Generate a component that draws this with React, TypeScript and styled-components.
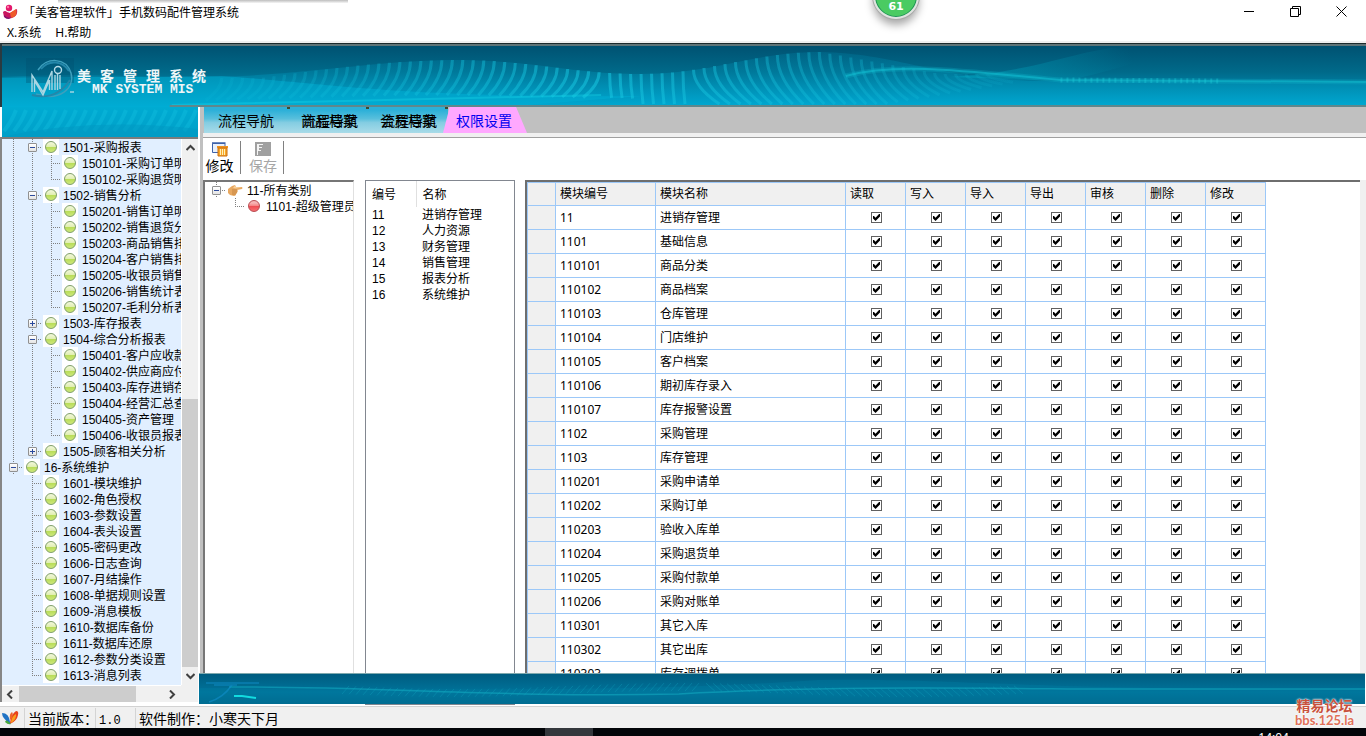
import React, { useState } from 'react';
import styled, { createGlobalStyle, css } from 'styled-components';

const GlobalStyle = createGlobalStyle`
  *, *::before, *::after { box-sizing: border-box; }
  body { margin: 0; background: #fff; color: #000; font: 12px/16px "Liberation Sans", "Noto Sans CJK SC", sans-serif; }
  button { font: inherit; color: inherit; background: none; border: 0; padding: 0; margin: 0; }
`;

const Window = styled.div`
  display: flex;
  flex-direction: column;
  height: 100vh;
  overflow: hidden;
`;

/* ---------- title bar and menu ---------- */

const TitleBar = styled.header`
  position: relative;
  flex: none;
  display: flex;
  align-items: center;
  height: 24px;
  padding: 0 12px 0 3px;
`;
const Title = styled.h1`
  margin: 0 auto 0 5px;
  font: 12px/16px "Noto Sans CJK SC", sans-serif;
`;
const WindowButtons = styled.div`
  display: flex;
  height: 22px;
`;
const WindowButton = styled.button`
  display: grid;
  place-items: center;
  width: 46px;
  height: 20px;
  &:last-child { width: 26px; margin-left: 10px; }
`;
const PopupShadow = styled.div`
  position: absolute;
  top: 0;
  left: 58px;
  width: 290px;
  height: 3px;
  background: linear-gradient(#bdbdbd, #f6f6f6);
`;
const ScoreBall = styled.div`
  position: absolute;
  z-index: 2;
  top: -27px;
  left: 65.6%;
  width: 46px;
  height: 46px;
  margin-left: -23px;
  padding-top: 24px;
  border: 2px solid #dfe3e0;
  border-radius: 50%;
  background: #4acb62;
  box-shadow: inset 0 0 0 1px #1f8f58, 0 0 0 1px #a9a9a9, 0 6px 8px rgba(0, 0, 0, 0.35);
  color: #fff;
  font: bold 11px/16px "DejaVu Sans", sans-serif;
  text-align: center;
`;
const MenuBar = styled.nav`
  flex: none;
  display: flex;
  gap: 14px;
  height: 19px;
  padding: 0 7px;
  border-bottom: 2px solid #f0f0f0;
  font-family: "Noto Sans", "Noto Sans CJK SC", sans-serif;
`;

/* ---------- brand banner ---------- */

const Banner = styled.section`
  position: relative;
  flex: none;
  height: 64px;
  padding: 18px 0 0 24px;
  display: flex;
  align-items: flex-start;
  border-top: 1px solid #1c2a2c;
  border-left: 2px solid #2a3a40;
  background: #00a4cc;
`;
const WaveArt = styled.svg`
  position: absolute;
  inset: 0;
  width: 100%;
  height: 100%;
`;
const Logo = styled.svg`
  position: relative;
  margin-top: -4px;
`;
const Brand = styled.div`
  position: relative;
  margin-left: 3px;
  padding-top: 5px;
  color: #eef6f8;
`;
const BrandName = styled.div`
  display: flex;
  gap: 9px;
  font: bold 14px/16px "Noto Sans CJK SC", sans-serif;
`;
const BrandSub = styled.div`
  padding-left: 15px;
  font: bold 13px/14px "Liberation Mono", monospace;
`;

/* ---------- body ---------- */

const Body = styled.div`
  flex: 1;
  min-height: 0;
  display: flex;
`;
const Sidebar = styled.aside`
  flex: none;
  display: flex;
  flex-direction: column;
  width: 199px;
  padding: 0 1px 0 2px;
  background: #fff;
`;
const SidebarArt = styled.div`
  position: relative;
  flex: none;
  height: 30px;
  background: linear-gradient(#00abd2, #009fc8);
`;
const TreeFrame = styled.div`
  flex: 1;
  min-height: 0;
  display: grid;
  grid-template: minmax(0, 1fr) 17px / minmax(0, 1fr) 17px;
  margin-left: -2px;
  margin-bottom: 4px;
  border-top: 2px solid #7c7c7c;
  border-left: 2px solid #868686;
  background: #f0f0f0;
`;
const SideTree = styled.ul`
  margin: 0;
  padding: 0 0 0 2px;
  overflow: hidden;
  list-style: none;
  background: #e1efff;
`;
const Corner = styled.div`
  background: #f0f0f0;
`;
const VScroll = styled.div`
  display: flex;
  flex-direction: column;
  align-items: center;
  justify-content: space-between;
  padding: 5px 0;
  border-left: 1px solid #fff;
`;
const VThumb = styled.div`
  width: 100%;
  height: 50%;
  margin: auto 0 4px;
  background: #cdcdcd;
`;
const HScroll = styled.div`
  display: flex;
  align-items: center;
  padding: 0 5px 0 4px;
  border-top: 1px solid #fff;
`;
const HThumb = styled.div`
  width: 117px;
  height: 100%;
  margin: 0 auto 0 4px;
  background: #cdcdcd;
`;

type Joint = 'none' | 'line' | 'tee' | 'end' | 'box';

const dotsV = 'repeating-linear-gradient(#808080 0 1px, transparent 1px 2px)';
const dotsH = 'repeating-linear-gradient(90deg, #808080 0 1px, transparent 1px 2px)';

const Row = styled.li`
  display: flex;
  height: 16px;
  line-height: 18px;
  white-space: nowrap;
`;
const Guide = styled.span<{ $joint: Joint }>`
  flex: none;
  display: grid;
  place-items: center;
  width: 19px;
  height: 16px;
  background-repeat: no-repeat;
  ${({ $joint }) => $joint === 'line' && css`
    background-image: ${dotsV};
    background-size: 1px 16px;
    background-position: 9px 0;
  `}
  ${({ $joint }) => $joint === 'tee' && css`
    background-image: ${dotsV}, ${dotsH};
    background-size: 1px 16px, 10px 1px;
    background-position: 9px 0, 9px 8px;
  `}
  ${({ $joint }) => $joint === 'end' && css`
    background-image: ${dotsV}, ${dotsH};
    background-size: 1px 9px, 10px 1px;
    background-position: 9px 0, 9px 8px;
  `}
  ${({ $joint }) => $joint === 'box' && css`
    background-image: ${dotsV}, ${dotsH};
    background-size: 1px 16px, 10px 1px;
    background-position: 9px 0, 9px 8px;
  `}
`;
const Expander = styled.button`
  position: relative;
  width: 9px;
  height: 9px;
  border: 1px solid #919191;
  border-radius: 1px;
  background: linear-gradient(#fff, #e4e4e4);
  &::before, &[aria-expanded='false']::after {
    content: '';
    position: absolute;
    top: 3px;
    left: 1px;
    width: 5px;
    height: 1px;
    background: #2b4a9c;
  }
  &[aria-expanded='false']::after { top: 1px; left: 3px; width: 1px; height: 5px; }
`;
const IconBox = styled.span`
  flex: none;
  display: grid;
  place-items: center;
  width: 16px;
  height: 16px;
  margin: 0 4px 0 1px;
  background: #fff;
`;
const Ball = styled.span<{ $red?: boolean }>`
  width: 12px;
  height: 12px;
  border: 1px solid ${({ $red }) => ($red ? '#b84a50' : '#7f9f68')};
  border-radius: 50%;
  background: ${({ $red }) =>
    $red
      ? 'linear-gradient(#f6b4b4 0 20%, #f58a8a 45%, #ee4a50 50%, #f76e70)'
      : 'linear-gradient(#f2f8dc, #e2efb4 45%, #b8dc58 52%, #cfe97c)'};
`;

/* ---------- work area ---------- */

const Main = styled.main`
  flex: 1;
  min-width: 0;
  display: flex;
  flex-direction: column;
`;
const Workspace = styled.div`
  flex: 1;
  min-height: 0;
  display: flex;
  flex-direction: column;
  margin-left: 1px;
  border-left: 3px solid #c0c0c0;
`;
const Tabs = styled.div`
  flex: none;
  display: flex;
  height: 26px;
  padding-left: 1px;
  background: #c0c0c0;
  font: 14px/26px "Noto Sans CJK SC", sans-serif;
`;
const Tab = styled.button<{ $first?: boolean }>`
  position: relative;
  width: ${({ $first }) => ($first ? '86px' : '79px')};
  padding-left: ${({ $first }) => ($first ? '14px' : '11px')};
  background: linear-gradient(#2cb0d8 0 12%, #58bfdc 45%, #84cde2 60%, #a8dbe8);
  line-height: 26px;
  text-align: left;
  &::before {
    content: '';
    position: absolute;
    top: 0;
    right: 0;
    width: 3px;
    height: 2px;
    background: #3a4a30;
  }
`;
const Ghost = styled.span`
  position: absolute;
  left: 12px;
  top: 0;
`;
const ActiveTab = styled.button`
  width: 84px;
  margin-left: -5px;
  padding-right: 2px;
  background: #ffa8ff;
  clip-path: polygon(8% 0, 87% 0, 100% 100%, 0 100%);
  color: #0000f0;
  line-height: 26px;
  z-index: 1;
`;
const TabEdge = styled.div`
  flex: none;
  height: 5px;
  background: #f0f0f0;
  border-bottom: 1px solid #a0a0a0;
`;
const Toolbar = styled.div`
  flex: none;
  display: flex;
  height: 42px;
  padding: 3px 0 6px;
`;
const Tool = styled.button`
  display: flex;
  flex-direction: column;
  align-items: center;
  width: 38px;
  padding-right: 4px;
  border-right: 1px solid #808080;
  font: 14px/16px "Noto Sans CJK SC", sans-serif;
  & + & { width: 43px; padding: 0 0 0 2px; }
  &:disabled { color: #a6a6a6; }
`;
const Panels = styled.div`
  flex: 1;
  min-height: 0;
  display: flex;
`;
const RoleTree = styled.ul`
  flex: none;
  width: 151px;
  margin: 0 11px 0 0;
  padding: 0 0 0 2px;
  overflow: hidden;
  list-style: none;
  border: solid #767676;
  border-width: 2px 0 0 2px;
  border-right: 1px solid #e0e0e0;
`;
const ListPanel = styled.div`
  flex: none;
  width: 150px;
  margin-right: 10px;
  overflow: hidden;
  border: 1px solid #828790;
  border-bottom: 0;
`;
const ListTable = styled.table`
  width: 100%;
  border-collapse: collapse;
  table-layout: fixed;
  th, td { height: 16px; padding: 0 0 0 6px; font-weight: normal; text-align: left; line-height: 16px; }
  th { height: 26px; padding-top: 1px; }
  th:first-child { width: 50px; border-right: 1px solid #e0e0e0; }
`;
const GridPanel = styled.div`
  flex: 1;
  min-width: 0;
  margin-right: 6px;
  overflow: hidden;
  border: solid #6e6e6e;
  border-width: 2px 0 0 2px;
  box-shadow: 6px 0 #f0f0f0;
`;
const Grid = styled.table`
  border-spacing: 0;
  border: solid #9cc8f8;
  border-width: 1px 0 0 1px;
  table-layout: fixed;
  width: 739px;
  font-family: "Noto Sans", "Noto Sans CJK SC", sans-serif;
  th, td {
    height: 24px;
    padding: 0 0 0 4px;
    border: solid #9cc8f8;
    border-width: 0 1px 1px 0;
    font-weight: normal;
    text-align: left;
    line-height: 16px;
  }
  thead th { height: 23px; }
  th { background: #f0f0f0; }
`;
const Column = styled.col<{ $width: number }>`
  width: ${({ $width }) => $width}px;
`;
const CheckCell = styled.td`
  && { padding: 0 0 0 25px; }
`;
const Check = styled.input`
  appearance: none;
  position: relative;
  display: block;
  width: 11px;
  height: 11px;
  margin: 0;
  border: 1px solid #606060;
  background: #fff;
  &:checked::after {
    content: '';
    position: absolute;
    inset: 1px;
    background: #000;
    clip-path: polygon(0 29%, 14% 29%, 36% 52%, 86% 0, 100% 0, 100% 36%, 36% 100%, 0 66%);
  }
`;
const FooterArt = styled.div`
  position: relative;
  flex: none;
  height: 31px;
  margin-right: 1px;
  background: linear-gradient(#005c80, #00739a 60%, #006488);
  border-top: 1px solid #7fa9ae;
`;
const FooterGap = styled.div`
  flex: none;
  height: 2px;
  padding-left: 166px;
  background: #fff;
  &::before { content: ''; display: block; width: 150px; height: 1px; background: #828790; }
`;

/* ---------- status and task bars ---------- */

const StatusBar = styled.footer`
  position: relative;
  flex: none;
  display: flex;
  align-items: center;
  height: 22px;
  padding-left: 2px;
  border-top: 1px solid #d2d2d2;
  background: #f0f0f0;
  font: 14px/20px "Noto Sans CJK SC", sans-serif;
`;
const StatusLogo = styled.svg`
  flex: none;
  margin-right: 5px;
`;
const StatusItem = styled.span<{ $width?: string }>`
  flex: none;
  width: ${({ $width }) => $width ?? 'auto'};
  height: 20px;
  padding-left: 3px;
  border-left: 1px solid #d4d4d4;
  white-space: nowrap;
`;
const Mono = styled.span`
  font: 12px/20px "Liberation Mono", monospace;
`;
const Watermark = styled.div`
  position: absolute;
  right: 12px;
  bottom: 1px;
  color: #c8513c;
  font: bold 14px/16px "Noto Sans CJK SC", sans-serif;
  text-align: center;
  text-shadow: 0 0 2px #fff, 0 0 2px #fff;
`;
const WatermarkUrl = styled.div`
  color: #e07058;
  font: bold 13px/14px Lato, sans-serif;
`;
const TaskBar = styled.div`
  flex: none;
  display: flex;
  justify-content: space-between;
  height: 8px;
  padding-left: 545px;
  overflow: hidden;
  background: #020509;
`;
const TaskItem = styled.div`
  width: 48px;
  background: #33373c;
`;
const Clock = styled.time`
  margin-right: 77px;
  padding-top: 2px;
  color: #fff;
  font: 12px/16px "Noto Sans", sans-serif;
`;

/* ---------- data ---------- */

type Node = { joints: Joint[]; label: string; open?: boolean };

const group = (label: string, open: boolean): Node => ({ joints: ['line', 'box'], label, open });
const leaves = (prefix: Joint[], labels: string[]): Node[] =>
  labels.map((label, i) => ({ joints: [...prefix, i === labels.length - 1 ? 'end' : 'tee'], label }));

const modules: Node[] = [
  group('1501-采购报表', true),
  ...leaves(['line', 'line'], ['150101-采购订单明细', '150102-采购退货明细']),
  group('1502-销售分析', true),
  ...leaves(['line', 'line'], [
    '150201-销售订单明细', '150202-销售退货分析', '150203-商品销售排行', '150204-客户销售排行',
    '150205-收银员销售', '150206-销售统计表', '150207-毛利分析表',
  ]),
  group('1503-库存报表', false),
  group('1504-综合分析报表', true),
  ...leaves(['line', 'line'], [
    '150401-客户应收款', '150402-供应商应付款', '150403-库存进销存', '150404-经营汇总查询',
    '150405-资产管理', '150406-收银员报表',
  ]),
  group('1505-顾客相关分析', false),
  { joints: ['box'], label: '16-系统维护', open: true },
  ...leaves(['none'], [
    '1601-模块维护', '1602-角色授权', '1603-参数设置', '1604-表头设置', '1605-密码更改',
    '1606-日志查询', '1607-月结操作', '1608-单据规则设置', '1609-消息模板', '1610-数据库备份',
    '1611-数据库还原', '1612-参数分类设置', '1613-消息列表',
  ]),
];

const categories = [
  ['11', '进销存管理'], ['12', '人力资源'], ['13', '财务管理'],
  ['14', '销售管理'], ['15', '报表分析'], ['16', '系统维护'],
];

const rights = ['读取', '写入', '导入', '导出', '审核', '删除', '修改'];

const permissions = [
  ['11', '进销存管理'], ['1101', '基础信息'], ['110101', '商品分类'], ['110102', '商品档案'],
  ['110103', '仓库管理'], ['110104', '门店维护'], ['110105', '客户档案'], ['110106', '期初库存录入'],
  ['110107', '库存报警设置'], ['1102', '采购管理'], ['1103', '库存管理'], ['110201', '采购申请单'],
  ['110202', '采购订单'], ['110203', '验收入库单'], ['110204', '采购退货单'], ['110205', '采购付款单'],
  ['110206', '采购对账单'], ['110301', '其它入库'], ['110302', '其它出库'], ['110303', '库存调拨单'],
];

/* ---------- drawings ---------- */

const upper = (x: number) =>
  x < 460 ? 34 - 18 * Math.sin(Math.max(0, (x - 260) / 200) * (Math.PI / 2)) :
  x < 640 ? 23 - 7 * Math.cos(((x - 460) / 180) * Math.PI) :
  x < 820 ? 19 + 11 * Math.cos(((x - 640) / 180) * Math.PI) :
  8 + 22 * Math.min(1, (x - 820) / 120);
const lower = (x: number) =>
  x < 640 ? 54 - 3 * Math.sin((x - 300) / 100) : x < 860 ? 60 : 60 - ((x - 860) / 140) * 24;

const ribs = Array.from({ length: 74 }, (_, i) => {
  const x = 220 + i * 10.5;
  const lean = x < 600 ? 16 : x < 690 ? -2 : -26;
  const top = upper(x);
  const bottom = Math.max(lower(x), top + 4);
  return `M${x} ${top.toFixed(1)}Q${x} ${((top + bottom) / 2).toFixed(1)} ${x - lean} ${bottom.toFixed(1)}`;
}).join('');

const BannerWaves = () => (
  <WaveArt viewBox="0 0 1366 63" preserveAspectRatio="none" aria-hidden="true">
    <defs>
      <linearGradient id="sea" x2="0" y2="1">
        <stop offset="0" stopColor="#005070" />
        <stop offset=".45" stopColor="#006a8a" />
        <stop offset="1" stopColor="#00a0cc" />
      </linearGradient>
      <linearGradient id="glow" x2="0" y2="1">
        <stop offset="0" stopColor="#0084a8" stopOpacity=".5" />
        <stop offset="1" stopColor="#00b2d8" stopOpacity=".9" />
      </linearGradient>
      <linearGradient id="haze" x1="960" x2="1130" y1="36" y2="4" gradientUnits="userSpaceOnUse">
        <stop offset="0" stopColor="#00a6c0" stopOpacity=".5" />
        <stop offset="1" stopColor="#00a6c0" stopOpacity="0" />
      </linearGradient>
      <linearGradient id="rib" x1="200" x2="1000" y1="0" y2="0" gradientUnits="userSpaceOnUse">
        <stop offset="0" stopColor="#10c4de" stopOpacity=".1" />
        <stop offset=".5" stopColor="#18c8e2" stopOpacity=".55" />
        <stop offset="1" stopColor="#18c8e2" stopOpacity=".1" />
      </linearGradient>
    </defs>
    <rect width="1366" height="63" fill="url(#sea)" />
    <path d="M0 33C90 28 170 36 240 32C330 27 390 15 465 16C540 18 580 31 640 30C720 29 750 8 820 8C900 10 930 34 1040 37L1366 39V63H0Z" fill="url(#glow)" opacity=".55" />
    <path d="M0 34C60 32 120 34 220 32C330 40 400 54 640 52L500 63H0Z" fill="#00b2d6" opacity=".45" />
    <path d="M950 33C1030 28 1060 12 1110 4L1180 8C1130 18 1090 34 1060 37Z" fill="url(#haze)" />
    <path d={ribs} fill="none" stroke="url(#rib)" strokeWidth="3" />
    <path d="M170 61C330 58 420 54 600 51" fill="none" stroke="#14d2e6" strokeWidth="2" opacity=".4" />
    <path d="M845 32C890 20 940 24 1060 36L1366 38" fill="none" stroke="#10bcd0" strokeWidth="5" opacity=".25" />
    <path d="M845 32C890 20 940 24 1060 36L1366 38" fill="none" stroke="#10bcd0" strokeWidth="2" opacity=".6" />
    <path d="M1060 36L1220 37" stroke="#20d0dc" strokeWidth="5" strokeDasharray="2 4" opacity=".35" />
    <rect width="1366" height="2" fill="#5e7478" />
    <rect x="168" y="61" width="1198" height="2" fill="#5f878c" />
  </WaveArt>
);

const SideWaves = () => (
  <WaveArt viewBox="0 0 196 30" preserveAspectRatio="none" aria-hidden="true">
    <path
      d={Array.from({ length: 19 }, (_, i) => `M${14 + i * 10} 3Q${10 + i * 10} 14 ${2 + i * 10} 24`).join('')}
      fill="none" stroke="#18c8e6" strokeWidth="4" opacity=".3"
    />
    <path d="M0 30Q90 10 196 22V30Z" fill="#0098c2" opacity=".5" />
  </WaveArt>
);

const FooterWaves = () => (
  <WaveArt viewBox="0 0 1166 30" preserveAspectRatio="none" aria-hidden="true">
    <path d="M0 14C200 14 420 20 620 6C760 4 860 18 1166 14V30H0Z" fill="#007ea4" opacity=".35" />
    <path
      d={Array.from({ length: 96 }, (_, i) => `M${150 + i * 7} ${12 + 3 * Math.sin(i / 10)}l${i > 50 ? 9 : -7} 8`).join('')}
      stroke="#10a4c0" strokeWidth="1" opacity=".35"
    />
    <path d="M30 13C180 12 300 24 480 20C620 12 760 14 880 15L1166 15" fill="none" stroke="#10a8c0" strokeWidth="1.5" opacity=".6" />
    <path d="M10 28Q24 24 33 11M7 9H60M15 11H38" fill="none" stroke="#1090cc" strokeWidth="1.5" opacity=".6" />
    <path d="M35 22H43L57 24" fill="none" stroke="#12dce0" strokeWidth="2" />
  </WaveArt>
);

const BrandLogo = () => (
  <Logo width="48" height="44" viewBox="0 0 48 44" aria-hidden="true">
    <rect width="48" height="25" fill="#004c6c" opacity=".35" />
    <path d="M12 12C20-1 40-1 45 15C49 30 34 44 10 36" fill="none" stroke="#3d9fbd" strokeWidth="1.5" />
    <path d="M15 11C23 1 37 3 43 13M6 37Q30 43 44 22" fill="none" stroke="#2387aa" strokeWidth="2" />
    <path d="M6 34V17L17 34L26 13V32M8.500 34V23L17 37L23.500 22V32M29 32V17M31.500 32V16M34 31V17" fill="none" stroke="#a9d6e2" strokeWidth="1.4" />
    <circle cx="32" cy="12" r="3.5" fill="none" stroke="#b8dde8" strokeWidth="1.4" />
    <path d="M44 34H48" stroke="#9fd4e2" strokeWidth="1.5" />
  </Logo>
);

const AppIcon = () => (
  <svg width="15" height="16" viewBox="0 0 15 16" aria-hidden="true">
    <circle cx="6" cy="4" r="3.2" fill="#e3186c" />
    <path d="M0 8Q2 6 4 8L7 9L14 5Q15 11 11 13Q5 16 1 13Z" fill="#c8145e" />
    <path d="M7 9L13 5Q15 10 11 13L8 14Z" fill="#ee5a2a" />
    <path d="M1 11Q5 15 9 13L6 15Q1 15 1 11Z" fill="#7e1470" />
    <circle cx="5" cy="3" r="1.2" fill="#ff77a8" />
  </svg>
);

const EditIcon = () => (
  <svg width="16" height="16" viewBox="0 0 16 16" aria-hidden="true">
    <path d="M.5 2.5H13V11.5H.5Z" fill="#e9f0fa" stroke="#3e62a8" />
    <path d="M0 2H13.5" stroke="#3e62a8" strokeWidth="1.5" />
    <path d="M5 5H16V7H5Z" fill="#f0921c" />
    <path d="M6 7H15V15H6Z" fill="#f8a828" stroke="#c86c10" />
    <path d="M8.5 8V14M10.500 8V14M12.500 8V14" stroke="#fff0b8" />
  </svg>
);

const SaveIcon = () => (
  <svg width="16" height="16" viewBox="0 0 16 16" aria-hidden="true">
    <path d="M0 1H16V15H0Z" fill="#a0a0a0" />
    <path d="M2 14V3H8V4H4V6H7V7H4V9H6V10H3V14Z" fill="#f4f4f4" />
  </svg>
);

const HandIcon = () => (
  <svg width="15" height="13" viewBox="0 0 15 13" aria-hidden="true">
    <path d="M0 5L4 2L7 1L8 3L14 3Q15 4 14 5L9 6Q11 7 9 8Q10 9 8 10Q8 12 6 12L2 11L0 9Z" fill="#e8a860" />
    <path d="M7 1.500L8 3L14 3.500L8 4.500L5 4Z" fill="#f8d09a" />
    <path d="M4 6H9M4 8H9M4 10H8" stroke="#b87838" strokeWidth=".7" />
  </svg>
);

const StatusIcon = () => (
  <StatusLogo width="17" height="15" viewBox="0 0 17 15" aria-hidden="true">
    <path d="M8 13Q9 4 14 1Q17 1 16 5Q15 11 8 14Z" fill="#e8431c" />
    <path d="M9 12Q10 6 14 4Q15 9 9 13Z" fill="#f9a01c" />
    <path d="M8 12Q7 3 0 3Q0 8 8 14Z" fill="#1f72c4" />
    <path d="M9 14Q4 8 3 12Q6 15 9 14Z" fill="#4aa83c" />
    <path d="M8 9Q7 4 10 2Q12 4 9 10Z" fill="#f0642c" />
  </StatusLogo>
);

const Chevron = ({ d }: { d: string }) => (
  <svg width="9" height="9" viewBox="0 0 9 9" aria-hidden="true">
    <path d={d} fill="none" stroke="#404040" strokeWidth="2" />
  </svg>
);

const TreeRow = ({ node, icon }: { node: Node; icon?: React.ReactNode }) => {
  const [open, setOpen] = useState(!!node.open);
  return (
    <Row>
      {node.joints.map((joint, i) => (
        <Guide key={i} $joint={joint}>
          {joint === 'box' && (
            <Expander type="button" aria-expanded={open} aria-label={node.label} onClick={() => setOpen(!open)} />
          )}
        </Guide>
      ))}
      <IconBox>{icon ?? <Ball />}</IconBox>
      {node.label}
    </Row>
  );
};

export default function App() {
  return (
    <Window>
      <GlobalStyle />
      <TitleBar>
        <PopupShadow />
        <ScoreBall>61</ScoreBall>
        <AppIcon />
        <Title>「美客管理软件」手机数码配件管理系统</Title>
        <WindowButtons>
          <WindowButton type="button" aria-label="最小化">
            <svg width="11" height="11"><path d="M0 5.500H10" stroke="#000" /></svg>
          </WindowButton>
          <WindowButton type="button" aria-label="还原">
            <svg width="11" height="11">
              <path d="M.5 2.500H8.500V10.500H.5ZM2.500 2V.5H10.500V8.500H9" fill="none" stroke="#000" />
            </svg>
          </WindowButton>
          <WindowButton type="button" aria-label="关闭">
            <svg width="11" height="11"><path d="M.5 .5L10.500 10.500M10.500 .5L.5 10.500" stroke="#000" /></svg>
          </WindowButton>
        </WindowButtons>
      </TitleBar>
      <MenuBar>
        <button type="button">X.系统</button>
        <button type="button">H.帮助</button>
      </MenuBar>
      <Banner>
        <BannerWaves />
        <BrandLogo />
        <Brand>
          <BrandName>
            {['美', '客', '管', '理', '系', '统'].map((c) => <span key={c}>{c}</span>)}
          </BrandName>
          <BrandSub>MK SYSTEM MIS</BrandSub>
        </Brand>
      </Banner>
      <Body>
        <Sidebar>
          <SidebarArt><SideWaves /></SidebarArt>
          <TreeFrame>
            <SideTree>
              {modules.map((node) => <TreeRow key={node.label} node={node} />)}
            </SideTree>
            <VScroll>
              <Chevron d="M.5 6L4.500 2L8.500 6" />
              <VThumb />
              <Chevron d="M.5 3L4.500 7L8.500 3" />
            </VScroll>
            <HScroll>
              <Chevron d="M6 .5L2 4.500L6 8.500" />
              <HThumb />
              <Chevron d="M3 .5L7 4.500L3 8.500" />
            </HScroll>
            <Corner />
          </TreeFrame>
        </Sidebar>
        <Main>
          <Workspace>
            <Tabs>
              <Tab type="button" $first>流程导航</Tab>
              <Tab type="button">商品档案<Ghost>流程导航</Ghost></Tab>
              <Tab type="button">会员档案<Ghost>流程导航</Ghost></Tab>
              <ActiveTab type="button">权限设置</ActiveTab>
            </Tabs>
            <TabEdge />
            <Toolbar>
              <Tool type="button"><EditIcon />修改</Tool>
              <Tool type="button" disabled><SaveIcon />保存</Tool>
            </Toolbar>
            <Panels>
              <RoleTree>
                <TreeRow node={{ joints: ['box'], label: '11-所有类别', open: true }} icon={<HandIcon />} />
                <TreeRow node={{ joints: ['none', 'end'], label: '1101-超级管理员' }} icon={<Ball $red />} />
              </RoleTree>
              <ListPanel>
                <ListTable>
                  <thead>
                    <tr><th>编号</th><th>名称</th></tr>
                  </thead>
                  <tbody>
                    {categories.map(([code, name]) => (
                      <tr key={code}><td>{code}</td><td>{name}</td></tr>
                    ))}
                  </tbody>
                </ListTable>
              </ListPanel>
              <GridPanel>
                <Grid>
                  <colgroup>
                    <Column $width={28} />
                    <Column $width={100} />
                    <Column $width={190} />
                    {rights.map((r) => <Column key={r} $width={60} />)}
                  </colgroup>
                  <thead>
                    <tr>
                      <th />
                      <th>模块编号</th>
                      <th>模块名称</th>
                      {rights.map((r) => <th key={r}>{r}</th>)}
                    </tr>
                  </thead>
                  <tbody>
                    {permissions.map(([code, name]) => (
                      <tr key={code}>
                        <th />
                        <td>{code}</td>
                        <td>{name}</td>
                        {rights.map((r) => (
                          <CheckCell key={r}>
                            <Check type="checkbox" defaultChecked aria-label={`${name} ${r}`} />
                          </CheckCell>
                        ))}
                      </tr>
                    ))}
                  </tbody>
                </Grid>
              </GridPanel>
            </Panels>
          </Workspace>
          <FooterArt><FooterWaves /></FooterArt>
          <FooterGap />
        </Main>
      </Body>
      <StatusBar>
        <StatusIcon />
        <StatusItem $width="71px">当前版本：</StatusItem>
        <StatusItem $width="40px"><Mono>1.0</Mono></StatusItem>
        <StatusItem>软件制作：小寒天下月</StatusItem>
        <Watermark>
          精易论坛
          <WatermarkUrl>bbs.125.la</WatermarkUrl>
        </Watermark>
      </StatusBar>
      <TaskBar>
        <TaskItem />
        <Clock>14:04</Clock>
      </TaskBar>
    </Window>
  );
}
